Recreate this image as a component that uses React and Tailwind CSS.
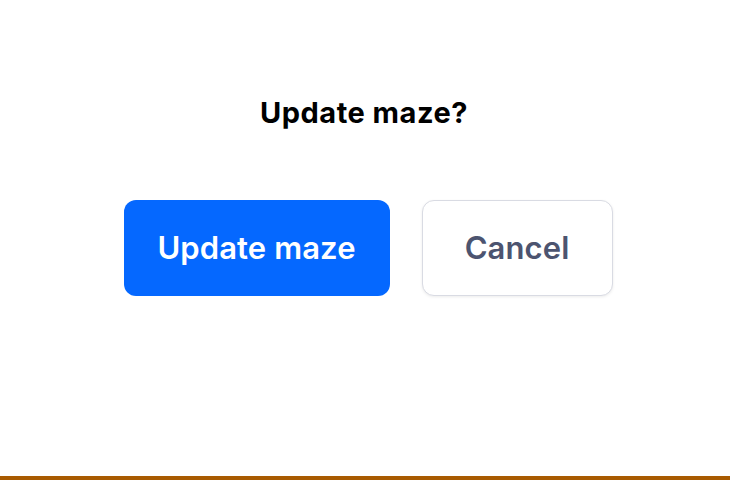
import React from "react";

export default function App() {
  return (
    <div className="w-[730px] h-[480px] bg-white flex flex-col" style={{ fontFamily: "Inter, 'Noto Sans', sans-serif" }}>
      <div className="flex-1 flex flex-col items-center pt-[95px]">
        <h1 className="text-[29px] leading-[36px] font-bold text-black tracking-[0.5px] -ml-[2px]">Update maze?</h1>
        <div className="flex gap-[32px] mt-[69px] ml-[6px]">
          <button className="w-[266px] h-[96px] rounded-[12px] bg-[#0568ff] text-white text-[31px] font-semibold tracking-[0.1px]">
            Update maze
          </button>
          <button className="w-[191px] h-[96px] rounded-[12px] bg-white border border-[#d9dbe3] shadow-[0_1px_3px_rgba(0,0,0,0.08)] text-[#4c5470] text-[31px] font-semibold tracking-[0.1px]">
            Cancel
          </button>
        </div>
      </div>
      <div className="h-[4px] bg-[#a85a00]" />
    </div>
  );
}
